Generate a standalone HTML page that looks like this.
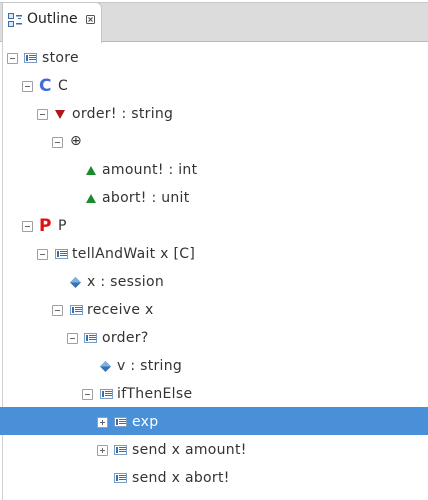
<!DOCTYPE html>
<html><head><style>
body{margin:0;width:428px;height:500px;background:#fff;position:relative;overflow:hidden;font-family:"DejaVu Sans","Liberation Sans",sans-serif;font-size:14px;color:#333}
.bar{position:absolute;left:0;top:2px;width:428px;height:38px;background:#dcdcdc;border-top:1px solid #c8c8c8;border-bottom:1px solid #b8b8b8}
.tab{position:absolute;left:2px;top:2px;width:98px;height:40px;background:#fff;border:1px solid #c8c8c8;border-bottom:none;border-radius:0 6px 0 0}
.lb{position:absolute;left:2px;top:40px;width:1px;height:460px;background:#d0d0d0}
.row{position:absolute;left:0;width:428px;height:28px}
.t{position:absolute;top:8px;width:9px;height:9px;border:1px solid #a0a0a0;border-radius:1px;background:#fff}
.t:after{content:"";position:absolute;left:2px;top:4px;width:5px;height:1px;background:#666}
.t.p:before{content:"";position:absolute;left:4px;top:2px;width:1px;height:5px;background:#666}
.tx{position:absolute;top:5px;white-space:nowrap;letter-spacing:0.3px}
.ic{position:absolute;top:6px}
.sel{background:#4a90d9;color:#fff}
</style></head><body>
<div class="bar"></div>
<div class="tab"></div>
<div class="lb"></div>
<svg style="position:absolute;left:8px;top:13px" width="14" height="14"><rect x="0.5" y="0.5" width="5" height="5" fill="#dbe8f6" stroke="#3a6ea5"/><rect x="0.5" y="8.5" width="5" height="5" fill="#dbe8f6" stroke="#3a6ea5"/><rect x="8" y="2" width="6" height="1.5" fill="#3a6ea5"/><rect x="8" y="10" width="6" height="1.5" fill="#3a6ea5"/><rect x="10" y="5" width="3" height="1" fill="#3a6ea5"/></svg>
<div style="position:absolute;left:27px;top:11px;font-size:14px;color:#222">Outline</div>
<svg style="position:absolute;left:86px;top:15px" width="9" height="9"><rect x="0.5" y="0.5" width="8" height="8" fill="none" stroke="#555" rx="1"/><path d="M2.5 2.5L6.5 6.5M6.5 2.5L2.5 6.5" stroke="#555" stroke-width="1.2"/></svg>

<div class="row" style="top:45px"><div class="t" style="left:7px"></div><svg class="ic" style="left:24px" width="14" height="14"><rect x="0.5" y="2.5" width="12" height="9" fill="#fff" stroke="#7a9cc6"/><rect x="2" y="4" width="2" height="6" fill="#3a6ea5"/><rect x="5" y="4" width="7" height="1" fill="#3a6ea5"/><rect x="5" y="6" width="7" height="1" fill="#3a6ea5"/><rect x="5" y="8" width="7" height="1" fill="#3a6ea5"/></svg><span class="tx" style="left:42px">store</span></div>
<div class="row" style="top:73px"><div class="t" style="left:22px"></div><span class="tx" style="left:39px;top:3px;font-weight:bold;color:#4169e1;font-size:17px">C</span><span class="tx" style="left:58px">C</span></div>
<div class="row" style="top:101px"><div class="t" style="left:37px"></div><svg class="ic" style="left:55px;top:9px" width="10" height="9"><polygon points="0,0 10,0 5,9" fill="#b01818"/></svg><span class="tx" style="left:72px">order! : string</span></div>
<div class="row" style="top:129px"><div class="t" style="left:52px"></div><span class="tx" style="left:70px;top:4px">⊕</span></div>
<div class="row" style="top:157px"><svg class="ic" style="left:86px;top:9px" width="10" height="9"><polygon points="5,0 10,9 0,9" fill="#1a8a2a"/></svg><span class="tx" style="left:102px">amount! : int</span></div>
<div class="row" style="top:185px"><svg class="ic" style="left:86px;top:9px" width="10" height="9"><polygon points="5,0 10,9 0,9" fill="#1a8a2a"/></svg><span class="tx" style="left:102px">abort! : unit</span></div>
<div class="row" style="top:213px"><div class="t" style="left:22px"></div><span class="tx" style="left:39px;top:3px;font-weight:bold;color:#e01010;font-size:17px">P</span><span class="tx" style="left:58px">P</span></div>
<div class="row" style="top:241px"><div class="t" style="left:37px"></div><svg class="ic" style="left:55px" width="14" height="14"><rect x="0.5" y="2.5" width="12" height="9" fill="#fff" stroke="#7a9cc6"/><rect x="2" y="4" width="2" height="6" fill="#3a6ea5"/><rect x="5" y="4" width="7" height="1" fill="#3a6ea5"/><rect x="5" y="6" width="7" height="1" fill="#3a6ea5"/><rect x="5" y="8" width="7" height="1" fill="#3a6ea5"/></svg><span class="tx" style="left:72px">tellAndWait x [C]</span></div>
<div class="row" style="top:269px"><svg class="ic" style="left:70px;top:8px" width="11" height="11"><polygon points="5.5,0 11,5.5 5.5,11 0,5.5" fill="#3a70b0"/><polygon points="5.5,0 11,5.5 0,5.5" fill="#7fb0e0"/></svg><span class="tx" style="left:87px">x : session</span></div>
<div class="row" style="top:297px"><div class="t" style="left:52px"></div><svg class="ic" style="left:70px" width="14" height="14"><rect x="0.5" y="2.5" width="12" height="9" fill="#fff" stroke="#7a9cc6"/><rect x="2" y="4" width="2" height="6" fill="#3a6ea5"/><rect x="5" y="4" width="7" height="1" fill="#3a6ea5"/><rect x="5" y="6" width="7" height="1" fill="#3a6ea5"/><rect x="5" y="8" width="7" height="1" fill="#3a6ea5"/></svg><span class="tx" style="left:87px">receive x</span></div>
<div class="row" style="top:325px"><div class="t" style="left:67px"></div><svg class="ic" style="left:84px" width="14" height="14"><rect x="0.5" y="2.5" width="12" height="9" fill="#fff" stroke="#7a9cc6"/><rect x="2" y="4" width="2" height="6" fill="#3a6ea5"/><rect x="5" y="4" width="7" height="1" fill="#3a6ea5"/><rect x="5" y="6" width="7" height="1" fill="#3a6ea5"/><rect x="5" y="8" width="7" height="1" fill="#3a6ea5"/></svg><span class="tx" style="left:102px">order?</span></div>
<div class="row" style="top:353px"><svg class="ic" style="left:100px;top:8px" width="11" height="11"><polygon points="5.5,0 11,5.5 5.5,11 0,5.5" fill="#3a70b0"/><polygon points="5.5,0 11,5.5 0,5.5" fill="#7fb0e0"/></svg><span class="tx" style="left:117px">v : string</span></div>
<div class="row" style="top:381px"><div class="t" style="left:82px"></div><svg class="ic" style="left:100px" width="14" height="14"><rect x="0.5" y="2.5" width="12" height="9" fill="#fff" stroke="#7a9cc6"/><rect x="2" y="4" width="2" height="6" fill="#3a6ea5"/><rect x="5" y="4" width="7" height="1" fill="#3a6ea5"/><rect x="5" y="6" width="7" height="1" fill="#3a6ea5"/><rect x="5" y="8" width="7" height="1" fill="#3a6ea5"/></svg><span class="tx" style="left:117px">ifThenElse</span></div>
<div class="row sel" style="top:407px;height:28px"><div class="t p" style="left:97px;top:10px"></div><svg class="ic" style="left:114px;top:8px" width="14" height="14"><rect x="0.5" y="2.5" width="12" height="9" fill="#fff" stroke="#7a9cc6"/><rect x="2" y="4" width="2" height="6" fill="#3a6ea5"/><rect x="5" y="4" width="7" height="1" fill="#3a6ea5"/><rect x="5" y="6" width="7" height="1" fill="#3a6ea5"/><rect x="5" y="8" width="7" height="1" fill="#3a6ea5"/></svg><span class="tx" style="left:132px;top:7px">exp</span></div>
<div class="row" style="top:437px"><div class="t p" style="left:97px"></div><svg class="ic" style="left:114px" width="14" height="14"><rect x="0.5" y="2.5" width="12" height="9" fill="#fff" stroke="#7a9cc6"/><rect x="2" y="4" width="2" height="6" fill="#3a6ea5"/><rect x="5" y="4" width="7" height="1" fill="#3a6ea5"/><rect x="5" y="6" width="7" height="1" fill="#3a6ea5"/><rect x="5" y="8" width="7" height="1" fill="#3a6ea5"/></svg><span class="tx" style="left:132px">send x amount!</span></div>
<div class="row" style="top:465px"><svg class="ic" style="left:114px" width="14" height="14"><rect x="0.5" y="2.5" width="12" height="9" fill="#fff" stroke="#7a9cc6"/><rect x="2" y="4" width="2" height="6" fill="#3a6ea5"/><rect x="5" y="4" width="7" height="1" fill="#3a6ea5"/><rect x="5" y="6" width="7" height="1" fill="#3a6ea5"/><rect x="5" y="8" width="7" height="1" fill="#3a6ea5"/></svg><span class="tx" style="left:132px">send x abort!</span></div>
</body></html>
